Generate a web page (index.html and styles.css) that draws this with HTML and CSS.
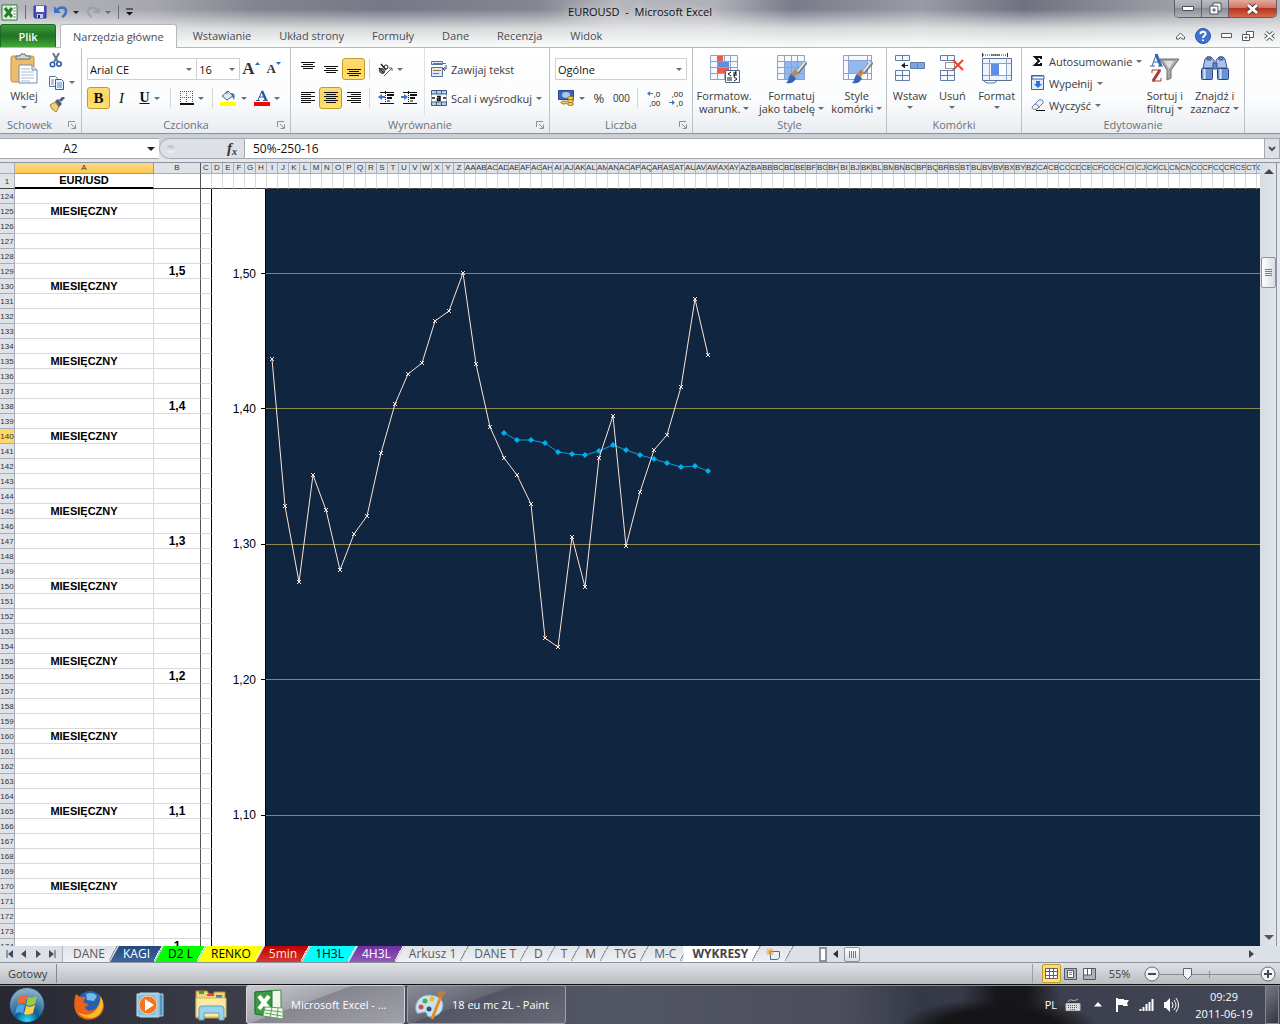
FILE: index.html
```html
<!DOCTYPE html>
<html lang="pl">
<head>
    <meta charset="UTF-8">
    <meta name="viewport" content="width=device-width, initial-scale=1.0">
    <title>EUROUSD - Microsoft Excel</title>
    <link rel="stylesheet" href="styles.css">
</head>
<body>
    <header class="window-top">
        <div class="titlebar">
            <div class="quick">
                <svg width="17" height="17" viewBox="0 0 17 17"><path d="M1 1h15v15H1z" fill="#fff" stroke="#217a2d"/><path d="M2 2h9v13H2z" fill="#d9efd0"/><path d="M4 4l7 9M11 4l-7 9" stroke="#21812e" stroke-width="3"/><path d="M12 4h3M12 7h3M12 10h3M12 13h3" stroke="#5aa34d"/></svg>
                <span class="quick-sep"></span>
                <button class="flat" aria-label="Zapisz"><svg width="14" height="14" viewBox="0 0 14 14"><path d="M1 1h12v12H2l-1-1z" fill="#4850bd" stroke="#303796"/><path d="M3 1h8v6H3z" fill="#f3f5ff"/><path d="M4 9h6v4H4z" fill="#c9cbe6"/><path d="M5 10h2v3H5z" fill="#23286e"/></svg></button>
                <button class="flat undo" aria-label="Cofnij"><svg width="14" height="14" viewBox="0 0 14 14"><path d="M0 1v7h7z" fill="#3c72c4"/><path d="M3 5c3-4 9-3 9 1 0 3-2 5-4 6" fill="none" stroke="#3c72c4" stroke-width="2.500"/></svg><i class="caret dark"></i></button>
                <button class="flat redo" aria-label="Ponów"><svg width="14" height="14" viewBox="0 0 14 14"><path d="M14 1v7H7z" fill="#9fa1a9"/><path d="M11 5C8 1 2 2 2 6c0 3 2 5 4 6" fill="none" stroke="#9fa1a9" stroke-width="2"/></svg><i class="caret"></i></button>
                <span class="quick-sep"></span>
                <button class="flat" aria-label="Dostosuj"><svg width="7" height="8" viewBox="0 0 7 8"><path d="M0 1h7" stroke="#111"/><path d="M0 4h7L3.500 7.500z" fill="#111"/></svg></button>
            </div>
            <h1 class="title">EUROUSD&nbsp; -&nbsp; Microsoft Excel</h1>
            <div class="win-buttons">
                <button aria-label="Minimalizuj"><svg width="12" height="5" viewBox="0 0 12 5"><path d="M.5.5h11v4H.5z" fill="#fff" stroke="#4b4e5a"/></svg></button>
                <button aria-label="Przywróć"><svg width="13" height="13" viewBox="0 0 13 13"><path d="M4 1h8v8H4z" fill="#fff" stroke="#4b4e5a"/><path d="M1 4h8v8H1z" fill="#fff" stroke="#4b4e5a"/><path d="M4 7h2v2H4z" fill="#fff" stroke="#4b4e5a"/></svg></button>
                <button class="close" aria-label="Zamknij"><svg width="13" height="12" viewBox="0 0 13 12"><path d="M2 2l9 8M11 2l-9 8" stroke="#5c3837" stroke-width="5"/><path d="M2 2l9 8M11 2l-9 8" stroke="#fff" stroke-width="3"/></svg></button>
            </div>
        </div>
        <nav class="tabs">
            <button class="file">Plik</button>
            <button class="active">Narzędzia główne</button>
            <button>Wstawianie</button>
            <button>Układ strony</button>
            <button>Formuły</button>
            <button>Dane</button>
            <button>Recenzja</button>
            <button>Widok</button>
            <div class="tab-tools">
                <svg width="9" height="8" viewBox="0 0 9 8"><path d="M.5 5L4.500 1l4 4v2H6L4.500 5 3 7H.5z" fill="#fff" stroke="#555a63"/></svg>
                <svg width="16" height="16" viewBox="0 0 16 16"><circle cx="8" cy="8" r="7.500" fill="#3f74cf" stroke="#2b55a2"/><path d="M5.500 6c0-3 5-3 5 0 0 2-2.500 1.500-2.500 4M8 11.500v1.500" stroke="#fff" stroke-width="2" fill="none"/></svg>
                <svg width="11" height="5" viewBox="0 0 11 5"><path d="M.5.5h10v4H.5z" fill="#fff" stroke="#555a63"/></svg>
                <svg width="12" height="11" viewBox="0 0 12 11"><path d="M4.500 1.500h7v6h-7z" fill="#fff" stroke="#555a63"/><path d="M.5 4.500h7v6h-7z" fill="#fff" stroke="#555a63"/><path d="M3 7h2v1H3z" fill="none" stroke="#555a63"/></svg>
                <svg width="11" height="10" viewBox="0 0 11 10"><path d="M1.500 1.500l8 7M9.500 1.500l-8 7" stroke="#555a63" stroke-width="4"/><path d="M1.500 1.500l8 7M9.500 1.500l-8 7" stroke="#fff" stroke-width="2"/></svg>
            </div>
        </nav>
    </header>

    <section class="ribbon">
        <div class="group clipboard">
            <div class="tools">
                <button class="big"><svg width="28" height="32" viewBox="0 0 28 32"><rect x="1" y="3" width="23" height="26" rx="2" fill="#edbd69" stroke="#c08b3c"/><path d="M6 6V3h4l1-2h4l1 2h4v3z" fill="#d5d8dc" stroke="#666b72"/><path d="M9 12h13l5 5v13H9z" fill="#fff" stroke="#7189b3"/><path d="M22 12v5h5" fill="#dce6f6" stroke="#7189b3"/><path d="M11 16h9M11 19h13M11 22h13M11 25h13M11 28h9" stroke="#a5bbdc"/></svg>Wklej<i class="caret"></i></button>
                <div class="stack">
                    <button class="flat" aria-label="Wytnij"><svg width="14" height="15" viewBox="0 0 14 15"><path d="M4 0l5 9M10 0L5 9" stroke="#68758c" stroke-width="2"/><circle cx="3.500" cy="11.500" r="2.200" fill="none" stroke="#2f5aa8" stroke-width="1.600"/><circle cx="10" cy="11" r="2.200" fill="none" stroke="#2f5aa8" stroke-width="1.600"/></svg></button>
                    <button class="flat" aria-label="Kopiuj"><svg width="16" height="14" viewBox="0 0 16 14"><path d="M.5.5h6l2 2v8h-8z" fill="#fff" stroke="#4870ae"/><path d="M6.500 3.500h6l2 2v8h-8z" fill="#e8f0fc" stroke="#355f9f"/><path d="M2 4h3M2 6h3M2 8h3M8 7h5M8 9h5M8 11h5" stroke="#5f8ac8"/></svg><i class="caret"></i></button>
                    <button class="flat" aria-label="Malarz formatów"><svg width="16" height="15" viewBox="0 0 16 15"><path d="M1 8l5-3 4 5-3 5-4-3z" fill="#efcf72" stroke="#a98436"/><path d="M6 4l3-2 4 5-3 3z" fill="#555c6e"/><path d="M11 4l4-4" stroke="#545b91" stroke-width="3"/></svg></button>
                </div>
            </div>
            <div class="group-name">Schowek<svg class="launcher" width="8" height="8" viewBox="0 0 8 8"><path d="M.5 6V.5H7M3 3l4 4M7.500 3.500v4h-4" fill="none" stroke="#8b9099"/></svg></div>
        </div>

        <div class="group font">
            <div class="tools rows">
                <div class="row">
                    <span class="combo face"><select aria-label="Czcionka"><option>Arial CE</option></select></span><span class="combo size"><select aria-label="Rozmiar czcionki"><option>16</option></select></span>
                    <button class="tool grow" aria-label="Zwiększ rozmiar czcionki">A<svg width="5" height="14" viewBox="0 0 5 14"><path d="M0 3h5L2.500 0z" fill="#3664ad"/></svg></button>
                    <button class="tool shrink" aria-label="Zmniejsz rozmiar czcionki">A<svg width="5" height="14" viewBox="0 0 5 14"><path d="M0 0h5L2.500 3z" fill="#3664ad"/></svg></button>
                </div>
                <div class="row">
                    <button class="tool on serif">B</button>
                    <button class="tool serif italic">I</button>
                    <button class="tool wide serif under"><u>U</u><i class="caret"></i></button>
                    <span class="sep"></span>
                    <button class="tool wide" aria-label="Obramowanie"><svg width="14" height="14" viewBox="0 0 14 14"><path d="M.5 0v12M6.500 0v12M12.500 0v12M0 .5h13M0 6.500h13" stroke="#555" stroke-dasharray="1 1"/><path d="M0 13h14" stroke="#111" stroke-width="2"/></svg><i class="caret"></i></button>
                    <span class="sep"></span>
                    <button class="tool wide" aria-label="Kolor wypełnienia"><svg width="17" height="16" viewBox="0 0 17 16"><path d="M2 6l6-5 5 5-6 4z" fill="#dce9fa" stroke="#47607f"/><path d="M7 4V1" stroke="#47607f"/><path d="M11 3c4 0 4 3 3 7l-2-4z" fill="#416aa9"/><path d="M0 12h16v4H0z" fill="#ff0"/></svg><i class="caret"></i></button>
                    <button class="tool wide" aria-label="Kolor czcionki"><svg width="16" height="16" viewBox="0 0 16 16"><path d="M4 10l4-9" stroke="#33559b" fill="none"/><path d="M8 1l4 9" stroke="#33559b" stroke-width="2.500"/><path d="M5 7h6M2 10.500h4M9 10.500h5" stroke="#33559b"/><path d="M0 12h16v4H0z" fill="red"/></svg><i class="caret"></i></button>
                </div>
            </div>
            <div class="group-name">Czcionka<svg class="launcher" width="8" height="8" viewBox="0 0 8 8"><path d="M.5 6V.5H7M3 3l4 4M7.500 3.500v4h-4" fill="none" stroke="#8b9099"/></svg></div>
        </div>

        <div class="group align">
            <div class="tools">
                <div class="rows">
                    <div class="row">
                        <button class="tool" aria-label="Do góry"><svg width="14" height="14" viewBox="0 0 14 14"><path d="M0 .5h14M2 2.500h10M0 4.500h14M2 6.500h10" stroke="#111"/></svg></button>
                        <button class="tool" aria-label="Do środka"><svg width="14" height="14" viewBox="0 0 14 14"><path d="M0 4.500h14M2 6.500h10M0 8.500h14M2 10.500h10" stroke="#111"/></svg></button>
                        <button class="tool on" aria-label="Do dołu"><svg width="14" height="14" viewBox="0 0 14 14"><path d="M0 7.500h14M2 9.500h10M0 11.500h14M2 13.500h10" stroke="#111"/></svg></button>
                        <span class="sep"></span>
                        <button class="tool wide" aria-label="Orientacja"><svg width="15" height="15" viewBox="0 0 15 15"><g fill="none" stroke="#222"><ellipse cx="4" cy="9" rx="2" ry="2.500" transform="rotate(-45 4 9)"/><path d="M1 6l5 5M3 2l5 6" stroke-width="1.500"/><circle cx="8" cy="5" r="2"/></g><path d="M6 14l8-8M14 9V6h-3" fill="none" stroke="#61656c"/></svg><i class="caret"></i></button>
                    </div>
                    <div class="row">
                        <button class="tool" aria-label="Do lewej"><svg width="14" height="12" viewBox="0 0 14 12"><path d="M0 .5h14M0 2.500h10M0 4.500h14M0 6.500h10M0 8.500h14M0 10.500h10" stroke="#111"/></svg></button>
                        <button class="tool on" aria-label="Wyśrodkuj"><svg width="14" height="12" viewBox="0 0 14 12"><path d="M0 .5h14M2 2.500h10M0 4.500h14M2 6.500h10M0 8.500h14M2 10.500h10" stroke="#111"/></svg></button>
                        <button class="tool" aria-label="Do prawej"><svg width="14" height="12" viewBox="0 0 14 12"><path d="M0 .5h14M4 2.500h10M0 4.500h14M4 6.500h10M0 8.500h14M4 10.500h10" stroke="#111"/></svg></button>
                        <span class="sep"></span>
                        <button class="tool" aria-label="Zmniejsz wcięcie"><svg width="16" height="14" viewBox="0 0 16 14"><path d="M2 1.500h14M9 4h7M9 7h5M9 10h3M2 12.500h14" stroke="#111"/><path d="M9 4h7M9 7h5" stroke="#111" stroke-width="2"/><path d="M7.500 0v14" stroke="#111" stroke-dasharray="1 1"/><path d="M0 6l4-3v2h3v2H4v2z" fill="#3b74cb"/></svg></button>
                        <button class="tool" aria-label="Zwiększ wcięcie"><svg width="16" height="14" viewBox="0 0 16 14"><path d="M2 1.500h14M9 4h7M9 7h5M9 10h3M2 12.500h14" stroke="#111"/><path d="M9 4h7M9 7h5" stroke="#111" stroke-width="2"/><path d="M7.500 0v14" stroke="#111" stroke-dasharray="1 1"/><path d="M7 6L3 3v2H0v2h3v2z" fill="#3b74cb"/></svg></button>
                    </div>
                </div>
                <div class="rows ruled">
                    <button class="line"><svg width="16" height="16" viewBox="0 0 16 16"><path d="M.5.5h11v3H.5zM.5 6.500h11v9H.5z" fill="#dfe9f7" stroke="#54729b"/><path d="M2 2.500h13" stroke="#a1673c"/><path d="M2 9.500h8M2 12.500h6" stroke="#a1673c"/><path d="M15 4v4h-3M14 6l-2 2 2 2" fill="none" stroke="#2f548c"/></svg>Zawijaj tekst</button>
                    <button class="line"><svg width="16" height="16" viewBox="0 0 16 16"><path d="M.5.500h15v15H.5z" fill="#bcd0ea" stroke="#3d5a87"/><path d="M5.500 0v4M10.500 0v4M5.500 12v4M10.500 12v4" stroke="#3d5a87"/><path d="M0 4h16v8H0z" fill="#fff" stroke="#3d5a87"/><path d="M1 8h3M12 8h3M6 6.500h3v4H6.500v-2H9" fill="none" stroke="#111" stroke-width="1.500"/></svg>Scal i wyśrodkuj<i class="caret"></i></button>
                </div>
            </div>
            <div class="group-name">Wyrównanie<svg class="launcher" width="8" height="8" viewBox="0 0 8 8"><path d="M.5 6V.5H7M3 3l4 4M7.500 3.500v4h-4" fill="none" stroke="#8b9099"/></svg></div>
        </div>

        <div class="group number">
            <div class="tools rows">
                <div class="row"><span class="combo format"><select aria-label="Format liczb"><option>Ogólne</option></select></span></div>
                <div class="row">
                    <button class="tool wide" aria-label="Format księgowy"><svg width="17" height="16" viewBox="0 0 17 16"><path d="M.5.5h15v9H.5z" fill="#3e68b4" stroke="#28488a"/><ellipse cx="8" cy="5" rx="4" ry="3" fill="#a9c6ee"/><ellipse cx="12.500" cy="8" rx="3" ry="1.500" fill="#f7d35c" stroke="#a5751e"/><ellipse cx="12.500" cy="11" rx="3" ry="1.500" fill="#f7d35c" stroke="#a5751e"/><ellipse cx="12.500" cy="14" rx="3" ry="1.500" fill="#f7d35c" stroke="#a5751e"/><ellipse cx="6" cy="12.500" rx="3" ry="1.500" fill="#f7d35c" stroke="#a5751e"/></svg><i class="caret"></i></button>
                    <button class="tool percent-style">%</button>
                    <button class="tool zeros">000</button>
                    <span class="sep"></span>
                    <button class="tool decimals"><span class="digits"><svg width="6" height="5" viewBox="0 0 6 5"><path d="M0 2.500L3 0v2h3v1H3v2z" fill="#3b74cb"/></svg>,0</span><span class="digits">,00</span></button>
                    <button class="tool decimals"><span class="digits">,00</span><span class="digits"><svg width="6" height="5" viewBox="0 0 6 5"><path d="M6 2.500L3 0v2H0v1h3v2z" fill="#3b74cb"/></svg>,0</span></button>
                </div>
            </div>
            <div class="group-name">Liczba<svg class="launcher" width="8" height="8" viewBox="0 0 8 8"><path d="M.5 6V.5H7M3 3l4 4M7.500 3.500v4h-4" fill="none" stroke="#8b9099"/></svg></div>
        </div>

        <div class="group styles">
            <div class="tools">
                <button class="big"><svg width="32" height="32" viewBox="0 0 32 32"><path d="M2.500 2.500h27v24h-27z" fill="#f5f9ff" stroke="#8ba3c7"/><path d="M9.500 3v24M16.500 3v24M22.500 3v24M3 8.500h26M3 14.500h26M3 20.500h26" stroke="#8ba3c7" fill="none"/><path d="M9 3h6v5H9zM9 15h12v5H9z" fill="#ef5b45"/><path d="M10 9h11v5H10z" fill="#5e8fe6"/><path d="M17.500 17.500h14v12h-14z" fill="#fff" stroke="#4d6288"/><path d="M23 19l-3 2 3 2M19 25h5M19 27h5M25 20h4M25 22h4M28 18l-2 6M26 24l3 2-3 2" fill="none" stroke="#111"/></svg><span>Formatow.</span><span>warunk.<i class="caret"></i></span></button>
                <button class="big"><svg width="32" height="32" viewBox="0 0 32 32"><path d="M2.500 2.500h27v24h-27z" fill="#f5f9ff" stroke="#8ba3c7"/><path d="M9 9h20v17H9z" fill="#92b8f2"/><path d="M9.500 3v24M16.500 3v24M22.500 3v24M3 8.500h26M3 14.500h26M3 20.500h26" stroke="#8ba3c7" fill="none"/><path d="M31 9l-9 11" stroke="#777e89" stroke-width="4"/><path d="M30 9l-8 10" stroke="#e6e7e9" stroke-width="2"/><path d="M23 19l-3-3-4 5 4 3z" fill="#bd874d"/><path d="M16 21l5 4c-2 5-6 6-10 5 3-2 2-7 5-9z" fill="#3767b6"/></svg><span>Formatuj</span><span>jako tabelę<i class="caret"></i></span></button>
                <button class="big"><svg width="32" height="32" viewBox="0 0 32 32"><path d="M2.500 2.500h28v24h-28z" fill="#f5f9ff" stroke="#8ba3c7"/><path d="M7.500 3v24M26.500 3v24M3 7.500h27M3 20.500h27" stroke="#8ba3c7"/><path d="M8 8h18v12H8z" fill="#92b8f2"/><path d="M31 9l-9 11" stroke="#777e89" stroke-width="4"/><path d="M30 9l-8 10" stroke="#e6e7e9" stroke-width="2"/><path d="M23 19l-3-3-4 5 4 3z" fill="#bd874d"/><path d="M16 21l5 4c-2 5-6 6-10 5 3-2 2-7 5-9z" fill="#3767b6"/></svg><span>Style</span><span>komórki<i class="caret"></i></span></button>
            </div>
            <div class="group-name">Style</div>
        </div>

        <div class="group cells">
            <div class="tools">
                <button class="big"><svg width="32" height="32" viewBox="0 0 32 32"><g fill="#f4f8ff" stroke="#637fa9"><path d="M1.500 2.500h14v5h-14zM1.500 17.500h14v10h-14zM8.500 2.500v5M8.500 17.500v10M1.500 22.500h14"/><path d="M16.500 9.500h14v6h-14z" fill="#7da3e8"/><path d="M23.500 9.500v6"/></g><path d="M8 12.500h6" stroke="#222"/><path d="M7 12.500l4-3v6z" fill="#222"/></svg>Wstaw<i class="caret"></i></button>
                <button class="big"><svg width="28" height="32" viewBox="0 0 28 32"><g fill="#f4f8ff" stroke="#637fa9"><path d="M2.500 2.500h14v5h-14zM2.500 17.500h14v10h-14zM9.500 2.500v5M9.500 17.500v10M2.500 22.500h14"/></g><path d="M7.500 9.500h9v6h-9z" fill="none" stroke="#333" stroke-dasharray="1 1"/><path d="M15 7l10 10M25 7L15 17" stroke="#ee4230" stroke-width="2"/></svg>Usuń<i class="caret"></i></button>
                <button class="big"><svg width="32" height="32" viewBox="0 0 32 32"><path d="M1.500 0v4M26.500 0v4" stroke="#333"/><path d="M2 2h25" stroke="#333" stroke-dasharray="1 1"/><path d="M10 2h9" stroke="#333"/><path d="M1.500 5.500h29v22h-29z" fill="#eef4fd" stroke="#5b7394"/><path d="M8.500 5v22M25.500 5v22M2 10.500h28M2 22.500h28" stroke="#8ba3c7"/><path d="M9 11h16v11H9z" fill="#fff"/><path d="M10 11h8v11h-8z" fill="#5e8fe6"/><path d="M3 28q1 2 4 2h6l3-2" fill="none" stroke="#5b7394"/></svg>Format<i class="caret"></i></button>
            </div>
            <div class="group-name">Komórki</div>
        </div>

        <div class="group edit">
            <div class="tools">
                <div class="edit-list">
                    <button class="line"><svg width="14" height="14" viewBox="0 0 14 14"><path d="M10 5V3H4l4 4-4 4h6V9" fill="none" stroke="#111" stroke-width="2"/></svg>Autosumowanie<i class="caret"></i></button>
                    <button class="line"><svg width="14" height="16" viewBox="0 0 14 16"><path d="M.5.500h12v14H.5z" fill="#e2ebf8" stroke="#3f63a5"/><path d="M1 1h12v3H1z" fill="#fff" stroke="#3f63a5"/><path d="M5 6h4v3h2l-4 4-4-4h2z" fill="#2e70d6"/></svg>Wypełnij<i class="caret"></i></button>
                    <button class="line"><svg width="14" height="14" viewBox="0 0 14 14"><path d="M1 9l7-7c3-1 5 1 4 3l-6 6c-3 1-5 0-5-2z" fill="#edf2fa" stroke="#65789a"/><path d="M4 6c2 0 4 2 4 4" fill="none" stroke="#65789a"/><path d="M5 12.500h9" stroke="#111"/></svg>Wyczyść<i class="caret"></i></button>
                </div>
                <button class="big"><svg width="32" height="32" viewBox="0 0 32 32"><path d="M11 6h19l-8 11v8l-4 2V17z" fill="#a5a7aa" stroke="#6b6e73"/><path d="M15 8h10l-5 8z" fill="#dcdddf"/><path d="M3 13l4-11" stroke="#3863b4"/><path d="M7 1l5 12" stroke="#3863b4" stroke-width="3"/><path d="M4 9h5M1 13h5M9 13h5" stroke="#3863b4"/><path d="M3 20v-3h9M3 28h9v-3" fill="none" stroke="#a63c38"/><path d="M11 17L4 28" stroke="#a63c38" stroke-width="3"/></svg><span>Sortuj i</span><span>filtruj<i class="caret"></i></span></button>
                <button class="big"><svg width="32" height="32" viewBox="0 0 32 32"><path d="M6 6l2-2h4l3 3v3h2V7l3-3h4l2 2 2 9H4z" fill="#a9c2ec" stroke="#3c588f"/><path d="M8 4h4v3H8zM20 4h4v3h-4zM14 10h4v6h-4z" fill="#6287cb" stroke="#3c588f"/><rect x="2.500" y="15.500" width="11" height="11" rx="1" fill="#6b91d5" stroke="#294884"/><rect x="18.500" y="15.500" width="11" height="11" rx="1" fill="#6b91d5" stroke="#294884"/><path d="M5.500 16v10M21.500 16v10" stroke="#dbe7fb" stroke-width="2"/></svg><span>Znajdź i</span><span>zaznacz<i class="caret"></i></span></button>
            </div>
            <div class="group-name">Edytowanie</div>
        </div>
    </section>

    <section class="formula-bar">
        <div class="name-box"><input type="text" value="A2" aria-label="Pole nazwy"><i class="caret dark"></i></div>
        <div class="fx"><span class="knob"></span><button class="flat" aria-label="Wstaw funkcję">f<small>x</small></button></div>
        <input class="formula" type="text" value="50%-250-16" aria-label="Pasek formuły">
        <button class="expand" aria-label="Rozwiń"><svg width="8" height="6" viewBox="0 0 8 6"><path d="M1 1l3 3 3-3" fill="none" stroke="#4c5158" stroke-width="2"/></svg></button>
    </section>

    <main class="workspace">
        <div class="sheet">
            <table>
                <thead>
                    <tr class="letters" id="letters">
                        <th class="corner"></th>
                        <th class="col-a selected">A</th>
                        <th class="col-b">B</th>
                        <th class="col-c">C</th>
                    </tr>
                    <tr class="frozen" id="frozen">
                        <th>1</th>
                        <td class="heading">EUR/USD</td>
                        <td class="col-b"></td>
                        <td></td>
                    </tr>
                </thead>
                <tbody id="rows">
                    <tr>
                        <th>124</th>
                        <td></td>
                        <td class="col-b"></td>
                        <td class="edge"></td>
                        <td class="chart" id="chart">
                            <svg width="1056" height="765" viewBox="212 189 1056 765">
                                <defs>
                                    <marker id="cross" markerWidth="7" markerHeight="7" refX="3" refY="3" markerUnits="userSpaceOnUse">
                                        <path d="M1 1l4 4M5 1L1 5" stroke="#fbe5d6"/>
                                    </marker>
                                    <marker id="diamond" markerWidth="7" markerHeight="7" refX="3" refY="3" markerUnits="userSpaceOnUse">
                                        <path d="M3 0l3 3-3 3-3-3z" fill="#00b0f0"/>
                                    </marker>
                                </defs>
                                <rect class="plot" x="265" y="189" width="1003" height="765"/>
                                <path class="grid-line" d="M266 273.500h1002M266 408.500h1002M266 544.500h1002M266 679.500h1002M266 815.500h1002"/>
                                <path class="axis" d="M265.500 189v765M261 273.500h5M261 408.500h5M261 544.500h5M261 679.500h5M261 815.500h5"/>
                                <g class="axis-text">
                                    <text x="256" y="278">1,50</text>
                                    <text x="256" y="413">1,40</text>
                                    <text x="256" y="548">1,30</text>
                                    <text x="256" y="684">1,20</text>
                                    <text x="256" y="819">1,10</text>
                                </g>
                                <polyline class="average" points="504,433 517,440 531,440 545,443 558,452 572,454 585,455 599,451 613,445 626,450 640,455 654,459 667,463 681,467 695,466 708,471"/>
                                <polyline class="price" points="272,359 285,506 299,582 313,475 326,510 340,570 354,534 367,516 381,453 395,404 408,374 422,363 435,321 449,311 463,273 476,364 490,427 504,458 517,475 531,504 545,638 558,647 572,537 585,587 599,458 613,416 626,546 640,492 654,450 667,435 681,387 695,299 708,355"/>
                            </svg>
                        </td>
                    </tr>
                </tbody>
            </table>
        </div>
        <div class="scroll-v">
            <button aria-label="W górę"><i class="up"></i></button>
            <span class="thumb-v"></span>
            <button aria-label="W dół"><i class="down"></i></button>
        </div>
    </main>

    <div class="sheet-bar">
        <div class="sheet-nav">
            <svg width="8" height="8" viewBox="0 0 8 8"><path d="M1 0v8" stroke="#444b57"/><path d="M7 0v8L2 4z" fill="#444b57"/></svg>
            <svg width="6" height="8" viewBox="0 0 6 8"><path d="M5 0v8L0 4z" fill="#444b57"/></svg>
            <svg width="6" height="8" viewBox="0 0 6 8"><path d="M1 0v8l5-4z" fill="#444b57"/></svg>
            <svg width="8" height="8" viewBox="0 0 8 8"><path d="M7 0v8" stroke="#444b57"/><path d="M1 0v8l5-4z" fill="#444b57"/></svg>
        </div>
        <div class="sheet-tabs">
            <button class="first">DANE</button>
            <button class="navy">KAGI</button>
            <button class="green">D2 L</button>
            <button class="yellow">RENKO</button>
            <button class="red">5min</button>
            <button class="cyan">1H3L</button>
            <button class="purple">4H3L</button>
            <button>Arkusz 1</button>
            <button>DANE T</button>
            <button>D</button>
            <button>T</button>
            <button>M</button>
            <button>TYG</button>
            <button>M-C</button>
            <button class="current">WYKRESY</button>
            <button aria-label="Wstaw arkusz"><svg width="15" height="13" viewBox="0 0 15 13"><path d="M4.500 3.500h9v6l-2 2h-7z" fill="#e7effb" stroke="#4d6b9c"/><path d="M4 0v8M0 4h8M1 1l6 6M7 1L1 7" stroke="#e79a23"/></svg></button>
        </div>
        <div class="scroll-h">
            <span class="splitter"></span>
            <button aria-label="W lewo"><i class="left"></i></button>
            <span class="thumb-h"></span>
            <button class="end" aria-label="W prawo"><i class="right"></i></button>
        </div>
    </div>

    <footer class="status">
        <span class="ready">Gotowy</span>
        <div class="views">
            <button class="view on" aria-label="Normalny"><svg width="13" height="11" viewBox="0 0 13 11"><path d="M.5.5h12v10H.5zM4.500 0v11M8.500 0v11M0 3.500h13M0 7.500h13" fill="#fff" stroke="#666257"/></svg></button>
            <button class="view" aria-label="Układ strony"><svg width="13" height="12" viewBox="0 0 13 12"><path d="M.5.5h12v11H.5z" fill="#aeb2b8" stroke="#555a62"/><path d="M3.500 2.500h6v7h-6z" fill="#fff" stroke="#555a62"/><path d="M5 4.500h3M5 6.500h3" stroke="#777"/></svg></button>
            <button class="view" aria-label="Podział stron"><svg width="13" height="12" viewBox="0 0 13 12"><path d="M.5.5h12v11H.5z" fill="#aeb2b8" stroke="#555a62"/><path d="M1 1h3v6H1zM5 1h3v6H5z" fill="#fff"/><path d="M4.500 0v7M8.500 0v7H0" fill="none" stroke="#555a62"/></svg></button>
            <span class="percent">55%</span>
            <button class="flat" aria-label="Pomniejsz"><svg width="16" height="16" viewBox="0 0 16 16"><circle cx="8" cy="8" r="7" fill="#f2f3f5" stroke="#646972"/><path d="M4 8h8" stroke="#464b53" stroke-width="2"/></svg></button>
            <svg class="slider" width="100" height="14" viewBox="0 0 100 14"><path d="M0 7.500h100M49.500 4v7" stroke="#888e99"/><path d="M23.500 1.500h8v7l-4 4-4-4z" fill="#f3f4f6" stroke="#5e636d"/></svg>
            <button class="flat" aria-label="Powiększ"><svg width="16" height="16" viewBox="0 0 16 16"><circle cx="8" cy="8" r="7" fill="#f2f3f5" stroke="#646972"/><path d="M4 8h8M8 4v8" stroke="#464b53" stroke-width="2"/></svg></button>
        </div>
    </footer>

    <div class="taskbar">
        <button class="start" aria-label="Start"><svg width="38" height="38" viewBox="0 0 38 38">
            <defs><radialGradient id="orb" cx="50%" cy="95%" r="85%"><stop offset="0" stop-color="#2ee0ff"/><stop offset=".4" stop-color="#0f5c92"/><stop offset="1" stop-color="#86aac6"/></radialGradient></defs>
            <circle cx="19" cy="19" r="17.500" fill="url(#orb)" stroke="#14354f"/><path d="M11 11q4-3 8-1l-2 8q-4-2-8 1z" fill="#ee6734"/><path d="M20 11q4 2 9-1l-2 8q-5 3-9 1z" fill="#98cc47"/><path d="M9 20q4-3 8-1l-2 8q-4-2-8 1z" fill="#4ba4e8"/><path d="M18 20q4 2 9-1l-2 8q-5 3-9 1z" fill="#fdd041"/></svg></button>
        <button class="pinned" aria-label="Firefox"><svg width="32" height="32" viewBox="0 0 32 32"><circle cx="17" cy="15" r="13" fill="#2a5fb0"/><path d="M13 5q7-3 11 2l-3 5-7-1z" fill="#6ebcee"/><path d="M3 5l4 3 6 0-3 5 6 3-4 2c1 5 9 5 13-1 3-4 2-8 1-11 5 5 7 13 2 19-6 7-18 8-24 0C0 19 1 10 3 5z" fill="#e8641b"/><path d="M28 8c5 9 0 21-11 21-5 0-9-2-12-6 9 6 20 3 23-15z" fill="#fbbb24"/></svg></button>
        <button class="pinned" aria-label="Windows Media Player"><svg width="28" height="28" viewBox="0 0 28 28"><path d="M8 3h19v22H8z" fill="#5594bd" stroke="#a5d2ec"/><path d="M4 2h19v24H4z" fill="#6baed6" stroke="#b7dcf1"/><path d="M1 3h20v22H1z" fill="#86bfe1" stroke="#c4e3f4"/><circle cx="12" cy="14" r="9" fill="#f1761f" stroke="#fbd0a1"/><path d="M9 8v12l9-6z" fill="#fff"/></svg></button>
        <button class="pinned" aria-label="Eksplorator"><svg width="34" height="32" viewBox="0 0 34 32"><path d="M2 5V2h11l2 3h5V3h11v26H2z" fill="#f1d37a" stroke="#b58e37"/><path d="M5 2h5v3H5z" fill="#30a840"/><path d="M13 5h7v2h-7z" fill="#df4836"/><path d="M22 6h6v3h-6z" fill="#3b82cc"/><path d="M2 9h30v19H2z" fill="#fbe9a3" stroke="#d7b459"/><path d="M5 31V20q0-3 3-3h19q3 0 3 3v11h-5v-7H10v7z" fill="#9bd2ec" stroke="#5d9fc5"/></svg></button>
        <button class="task front"><svg width="32" height="32" viewBox="0 0 32 32"><path d="M2 3l26-2v21H2z" fill="#eef7ea" stroke="#338c3e"/><path d="M2 3l17-1v26L2 25z" fill="#3b9a45" stroke="#226f2e"/><path d="M6 7l10 13M16 7L6 20" stroke="#fff" stroke-width="4"/><path d="M12 18l18 1v11l-20-3z" fill="#f5fbf3" stroke="#61a35f"/><path d="M12 21l17 2M12 24l17 3M19 18l-2 11M25 19l-1 11" stroke="#61a35f"/></svg>Microsoft Excel - ...</button>
        <button class="task"><svg width="32" height="32" viewBox="0 0 32 32"><path d="M15 6c8 0 14 4 14 10 0 8-7 12-13 12-4 0-2-4-5-5-3 0-5 2-8 1C-1 17 4 6 15 6z" fill="#c5e4f2" stroke="#78abc7"/><circle cx="7" cy="18" r="2.500" fill="#e7473b"/><circle cx="11" cy="12" r="2.500" fill="#4eaf47"/><circle cx="18" cy="10" r="2.500" fill="#f0b72c"/><circle cx="15" cy="20" r="2.500" fill="#31566e"/><path d="M27 7l-9 23" stroke="#e98a2c" stroke-width="3"/><path d="M24 8c-2-6 3-7 8-5-1 2-3 3-4 6z" fill="#b97d46"/></svg>18 eu mc 2L - Paint</button>
        <div class="tray">
            <span>PL</span>
            <svg width="16" height="14" viewBox="0 0 16 14"><path d="M1 5.500h14v7H1z" fill="#ddd" stroke="#bbb"/><path d="M3 7.500h10M3 9.500h10M5 11.500h6" stroke="#555" stroke-dasharray="1 1"/><path d="M3 4c2-5 5 1 10-3" fill="none" stroke="#bbb"/></svg>
            <svg class="tray-up" width="8" height="5" viewBox="0 0 8 5"><path d="M0 4.500h8L4 0z" fill="#fff"/></svg>
            <svg width="16" height="16" viewBox="0 0 16 16"><path d="M2 1v14" stroke="#fff" stroke-width="2"/><path d="M3 2h6v1h5l-2 3 1 3H8V8H3z" fill="#fff"/></svg>
            <svg width="16" height="14" viewBox="0 0 16 14"><path d="M1.500 11v2M4.500 9v4M7.500 6v7M10.500 4v9M13.500 1v12" stroke="#fff" stroke-width="2"/></svg>
            <svg width="16" height="16" viewBox="0 0 16 16"><path d="M1 5h2l4-4v14l-4-4H1z" fill="#fff"/><path d="M9 5q2 3 0 6M11 3q4 5 0 10M13 1q5 7 0 14" fill="none" stroke="#fff"/></svg>
        </div>
        <div class="clock"><span>09:29</span><span>2011-06-19</span></div>
        <button class="show-desktop" aria-label="Pokaż pulpit"></button>
    </div>

    <script>
        const columns = 96;
        const firstColumn = 4;
        const firstRow = 124;
        const lastRow = 174;
        const prices = { 129: '1,5', 138: '1,4', 147: '1,3', 156: '1,2', 165: '1,1', 174: '1' };

        function columnName(n) {
            let name = '';
            while (n > 0) {
                name = String.fromCharCode(65 + (n - 1) % 26) + name;
                n = Math.floor((n - 1) / 26);
            }
            return name;
        }

        const letters = document.getElementById('letters');
        const frozen = document.getElementById('frozen');
        for (let i = 0; i < columns; i++) {
            const th = document.createElement('th');
            th.textContent = columnName(firstColumn + i);
            letters.appendChild(th);
            frozen.appendChild(document.createElement('td'));
        }

        const chart = document.getElementById('chart');
        chart.colSpan = columns;
        chart.rowSpan = lastRow - firstRow + 1;

        const rows = document.getElementById('rows');
        for (let r = firstRow + 1; r <= lastRow; r++) {
            const tr = document.createElement('tr');
            const label = r % 5 === 0 ? 'MIESIĘCZNY' : '';
            const mark = r === 140 ? ' class="marked"' : '';
            tr.innerHTML = `<th${mark}>${r}</th><td>${label}</td><td class="col-b">${prices[r] || ''}</td><td class="edge"></td>`;
            rows.appendChild(tr);
        }
    </script>
</body>
</html>
```
FILE: styles.css
```css
* {
    box-sizing: border-box;
}

body {
    margin: 0;
    height: 100vh;
    display: flex;
    flex-direction: column;
    overflow: hidden;
    font-family: "Open Sans", "Noto Sans", sans-serif;
    font-size: 11px;
    color: #3b3b3b;
    background-color: #dfe3e8;
}

button, input, select {
    font: inherit;
    color: inherit;
    margin: 0;
    padding: 0;
    border: 0;
    background: none;
}

button {
    display: flex;
    align-items: center;
    justify-content: center;
    white-space: nowrap;
}

svg {
    display: block;
    flex: none;
}

.caret {
    border: 3px solid transparent;
    border-top-color: #6a6d73;
    border-bottom: 0;
    flex: none;
}

.caret.dark {
    border-width: 4px 4px 0;
    border-top-color: #222;
}

/* title bar and tabs */

.window-top {
    flex: none;
    border-bottom: 1px solid #b4b8bb;
    background: linear-gradient(rgba(255, 255, 255, 0) 20%, rgba(236, 238, 238, 0.8) 60%, #f7f8f8 95%),
        linear-gradient(90deg, #b7b7be 0, #a6a6ae 12%, #84848f 20%, #777886 30%, #858692 42%, #b6b6bd 48%, #b0b0b8 56%, #7a7b89 62%, #9b9ba6 72%, #70717f 80%, #9999a2 90%, #b3b3ba 100%);
}

.titlebar {
    display: grid;
    grid-template-columns: 1fr auto 1fr;
    height: 24px;
}

.quick {
    display: flex;
    align-items: center;
    gap: 7px;
    padding-left: 1px;
}

.quick-sep {
    width: 1px;
    height: 14px;
    background-color: #6c6d76;
}

.quick .caret {
    margin-left: 5px;
}

.quick .dark {
    border-width: 3px 3px 0;
}

.title {
    margin: 0;
    font-size: 11px;
    font-weight: normal;
    line-height: 24px;
    color: #111;
    text-shadow: 0 0 8px #fff;
}

.win-buttons {
    display: flex;
    justify-self: end;
    height: 18px;
    margin-right: 3px;
    border: 1px solid #5c5d67;
    border-top: 0;
    border-radius: 0 0 5px 5px;
    overflow: hidden;
}

.win-buttons button {
    width: 27px;
    background: linear-gradient(#bbbcc2, #9fa0a9 50%, #8a8b95 50%, #b2b3ba);
    border-right: 1px solid #5c5d67;
}

.win-buttons .close {
    width: 47px;
    border: 0;
    background: linear-gradient(#e3aaa0, #cf6f5d 50%, #b8331d 50%, #d5694c);
}

.tabs {
    display: flex;
    align-items: stretch;
    height: 23px;
}

.tabs button {
    padding: 0 14px;
    color: #4a4d52;
}

.tabs .file {
    width: 56px;
    margin-right: 4px;
    color: #fff;
    font-weight: 600;
    border: 1px solid #1c6b20;
    border-bottom: 0;
    border-radius: 3px 3px 0 0;
    background: linear-gradient(#3f9b3c, #1f7423 50%, #43a838);
}

.tabs .active {
    height: 24px;
    margin-right: 2px;
    padding: 0 12px;
    border: 1px solid #b4b8bb;
    border-bottom: 0;
    border-radius: 3px 3px 0 0;
    background-color: #fff;
}

.tab-tools {
    display: flex;
    align-items: center;
    gap: 10px;
    margin-left: auto;
    padding-right: 5px;
}

/* ribbon */

.ribbon {
    display: flex;
    flex: none;
    height: 86px;
    background: linear-gradient(#fff, #fbfcfd 60%, #e9ecf0);
    border-bottom: 1px solid #8d939b;
}

.group {
    display: flex;
    flex-direction: column;
    flex: none;
    border-right: 1px solid #bdc1c7;
}

.clipboard { width: 82px; }
.font { width: 209px; }
.align { width: 259px; }
.number { width: 143px; }
.styles { width: 194px; }
.cells { width: 135px; }
.edit { width: 223px; }

.tools {
    display: flex;
    flex: 1;
    padding: 0 5px;
}

.group-name {
    display: grid;
    grid-template-columns: 1fr auto 1fr;
    align-items: center;
    height: 17px;
    padding: 0 5px;
    color: #6b717b;
}

.group-name::before {
    content: "";
}

.clipboard .group-name {
    grid-template-columns: 2px auto 1fr;
}

.launcher {
    justify-self: end;
}

.rows {
    display: flex;
    flex-direction: column;
    gap: 7px;
    padding-top: 10px;
}

.tools.rows {
    padding: 10px 5px 0;
}

.row {
    display: flex;
    align-items: center;
    height: 22px;
}

.ruled {
    margin-left: 4px;
    padding-left: 6px;
    border-left: 1px solid #dfe1e4;
}

.sep {
    width: 1px;
    height: 20px;
    margin: 0 4px;
    background-color: #d3d6da;
}

.tool {
    width: 23px;
    height: 22px;
    border: 1px solid transparent;
    border-radius: 3px;
}

.tool.wide {
    width: 33px;
    gap: 4px;
}

.tool.on, .view.on {
    border-color: #c29b29;
    background: linear-gradient(#fbdb7c, #fed65d 50%, #ffe374);
}

.serif, .grow, .shrink {
    font-family: "Liberation Serif", serif;
    font-size: 15px;
    font-weight: bold;
    color: #111;
}

.italic {
    font-style: italic;
    font-weight: normal;
}

.under {
    font-size: 14px;
}

.grow {
    font-size: 17px;
    color: #333;
}

.shrink {
    font-size: 13px;
    color: #333;
}

.combo {
    display: grid;
    align-items: center;
    height: 22px;
    color: #111;
    background-color: #fff;
    border: 1px solid #cdd0d4;
}

.combo select {
    grid-area: 1 / 1;
    width: 100%;
    height: 20px;
    padding-left: 2px;
    appearance: none;
}

.combo::after {
    content: "";
    grid-area: 1 / 1;
    justify-self: end;
    margin-right: 4px;
    border: 3px solid transparent;
    border-top-color: #6a6d73;
    border-bottom: 0;
    pointer-events: none;
}

.face {
    width: 112px;
}

.size {
    width: 43px;
    border-left: 0;
}

.format {
    width: 134px;
}

.percent-style {
    font-size: 13px;
}

.zeros {
    font-family: "Liberation Sans", sans-serif;
    font-size: 10px;
}

.decimals {
    flex-direction: column;
    align-items: flex-end;
    padding-right: 3px;
    font-size: 8px;
    line-height: 9px;
    color: #111;
}

.digits {
    display: flex;
    align-items: center;
    gap: 1px;
    height: 9px;
}

.line {
    height: 22px;
    gap: 4px;
    justify-content: flex-start;
}

.big {
    flex-direction: column;
    justify-content: flex-start;
    padding: 5px 3px 0;
    line-height: 13px;
}

.big svg {
    margin-bottom: 4px;
}

.big span {
    display: flex;
    align-items: center;
    gap: 3px;
}

.big > .caret {
    margin-top: 4px;
}

.clipboard .tools {
    gap: 8px;
    padding: 0 7px;
}

.stack {
    display: flex;
    flex-direction: column;
    align-items: flex-start;
    justify-content: space-between;
    padding: 5px 0 4px;
}

.stack .flat {
    gap: 4px;
}

.styles .tools, .cells .tools {
    justify-content: space-around;
    padding: 0;
}

.edit .tools {
    justify-content: space-between;
    padding: 0 2px 0 9px;
}

.edit-list {
    padding-top: 2px;
}

/* formula bar */

.formula-bar {
    display: flex;
    flex: none;
    height: 29px;
    padding: 4px 0 3px;
    font-size: 12px;
    color: #111;
    background: linear-gradient(#c9ced4, #e4e8ee);
    border-bottom: 1px solid #8d939b;
}

.name-box {
    display: flex;
    align-items: center;
    width: 159px;
    padding-right: 4px;
    background-color: #fff;
    border: 1px solid #a4a9b0;
    border-width: 1px 0;
}

.name-box input {
    flex: 1;
    min-width: 0;
    padding-right: 6px;
    text-align: center;
}

.fx {
    display: flex;
    align-items: center;
    justify-content: space-between;
    width: 86px;
    padding: 0 7px;
    background-color: #dde1e6;
    border: 1px solid #a4a9b0;
    border-radius: 11px 0 0 11px;
}

.fx button {
    font: italic bold 15px "Liberation Serif", serif;
    color: #333;
}

.fx small {
    font-size: 10px;
    margin-top: 5px;
}

.knob {
    width: 8px;
    height: 8px;
    border-radius: 50%;
    background: linear-gradient(#b9bec5, #f5f6f8);
}

.formula {
    flex: 1;
    padding-left: 8px;
    background-color: #fff;
    border: 1px solid #a4a9b0;
    border-width: 1px 0;
}

.expand {
    width: 16px;
    background-color: #dde1e6;
    border: 1px solid #a4a9b0;
}

/* sheet */

.workspace {
    display: flex;
    flex: 1;
    min-height: 0;
}

.sheet {
    flex: 1;
    min-width: 0;
    overflow: hidden;
    background-color: #fff;
}

.sheet table {
    width: 1268px;
    table-layout: fixed;
    border-collapse: separate;
    border-spacing: 0;
    font-family: "Liberation Sans", Arial, sans-serif;
    line-height: 13px;
}

.sheet th, .sheet td {
    height: 15px;
    padding: 1px 0 0;
    overflow: hidden;
    white-space: nowrap;
    text-align: center;
    border-right: 1px solid #d9d9d9;
    border-bottom: 1px solid #d9d9d9;
}

.sheet td {
    font-size: 11px;
    font-weight: bold;
    color: #000;
}

.sheet th {
    font-size: 8px;
    font-weight: normal;
    color: #333;
    background-color: #dfe3e8;
    border-color: #a9aeb6;
}

.sheet .letters th {
    width: 11px;
    height: 11px;
    padding: 0;
    line-height: 10px;
}

.sheet .letters .corner {
    width: 15px;
}

.sheet .letters .col-a {
    width: 139px;
}

.sheet .letters .col-b {
    width: 47px;
}

.sheet .letters .selected {
    background: linear-gradient(#f9d98a, #fec94e);
    border-color: #c29b29;
}

.sheet .marked {
    background-color: #ffd965;
}

.sheet .frozen > * {
    border-bottom-color: #444;
}

.sheet .frozen .heading {
    padding: 0;
    border-bottom: 2px solid #000;
}

.sheet .col-b {
    border-right-color: #555;
}

.sheet td.col-b {
    font-size: 12px;
}

.sheet .edge {
    border-right-color: #000;
}

.sheet .chart {
    padding: 0;
    vertical-align: top;
    border: 0;
}

.plot {
    fill: #10253f;
}

.grid-line {
    stroke: #8d8650;
}

.axis {
    stroke: #000;
}

.axis-text {
    font-size: 12px;
    font-weight: normal;
    text-anchor: end;
}

.price, .average {
    fill: none;
}

.price {
    stroke: #fbe5d6;
    marker: url(#cross);
}

.average {
    stroke: #00a0dc;
    marker: url(#diamond);
}

.scroll-v {
    display: flex;
    flex-direction: column;
    align-items: center;
    width: 20px;
    padding-right: 3px;
    background: linear-gradient(90deg, #d7dce3, #e2e6ec 16px, #8d939b 16px, #8d939b 17px, #e4e8ee 17px);
}

.scroll-v button {
    width: 16px;
    height: 17px;
}

.thumb-v {
    width: 15px;
    height: 31px;
    margin: 77px 0 auto;
    border: 1px solid #8d939b;
    border-radius: 2px;
    background: repeating-linear-gradient(#777d86 0 1px, transparent 1px 2px) center / 7px 7px no-repeat,
        linear-gradient(90deg, #fff, #d8dce2);
}

.up, .down, .left, .right {
    border: 5px solid transparent;
}

.up {
    border-bottom-color: #444;
    border-top: 0;
}

.down {
    border-top-color: #555;
    border-bottom: 0;
}

.left {
    border-width: 4px 5px;
    border-right-color: #333;
    border-left: 0;
}

.right {
    border-width: 4px 5px;
    border-left-color: #444;
    border-right: 0;
}

/* sheet tabs */

.sheet-bar {
    display: flex;
    flex: none;
    height: 17px;
    background-color: #dce1e8;
    border-bottom: 1px solid #8d939b;
}

.sheet-nav {
    display: flex;
    align-items: center;
    justify-content: space-between;
    width: 63px;
    padding: 0 6px;
    border-right: 1px solid #b0b5bd;
}

.sheet-tabs {
    display: flex;
    font-size: 12px;
    color: #555a60;
}

.sheet-tabs button {
    --fill: linear-gradient(#dfe3e8, #eff1f4);
    --edge: #9a9fa7;
    margin-left: -8px;
    padding: 0 13px;
    line-height: 16px;
    clip-path: polygon(9px 0, 100% 0, calc(100% - 9px) 100%, 0 100%);
    background: linear-gradient(to bottom right, transparent 42%, var(--edge) 42% 50%, transparent 50%) right / 9px 100% no-repeat, var(--fill);
}

.sheet-tabs .first {
    margin-left: 0;
    padding-left: 10px;
    clip-path: polygon(0 0, 100% 0, calc(100% - 9px) 100%, 0 100%);
}

.sheet-tabs .navy { --fill: linear-gradient(#1f497d, #41669c); --edge: #eee; color: #fff; }
.sheet-tabs .green { --fill: linear-gradient(#0f0, #0f0); --edge: #eee; color: #000; }
.sheet-tabs .yellow { --fill: linear-gradient(#ff0, #ff0); --edge: #eee; color: #000; }
.sheet-tabs .red { --fill: linear-gradient(#c00000, #d63a32); --edge: #eee; color: #ffe9c9; }
.sheet-tabs .cyan { --fill: linear-gradient(#0ff, #0ff); --edge: #eee; color: #000; }
.sheet-tabs .purple { --fill: linear-gradient(#7030a0, #925bb9); --edge: #eee; color: #fff; }

.sheet-tabs .current {
    --fill: linear-gradient(#fff, #fff);
    margin-left: -6px;
    padding-left: 9px;
    font-weight: bold;
    color: #444;
    clip-path: polygon(0 0, 100% 0, calc(100% - 9px) 100%, 0 100%);
}

.scroll-h {
    display: flex;
    flex: 1;
    align-items: center;
    max-width: 461px;
    margin-left: auto;
}

.scroll-h button {
    width: 17px;
}

.scroll-h .end {
    margin-left: auto;
    margin-right: 20px;
}

.splitter {
    width: 8px;
    height: 15px;
    border: 2px solid #8d939b;
    background-color: #fff;
}

.thumb-h {
    width: 16px;
    height: 15px;
    border: 1px solid #8d939b;
    border-radius: 2px;
    background: repeating-linear-gradient(90deg, #777d86 0 1px, transparent 1px 2px) center / 7px 7px no-repeat,
        linear-gradient(#fff, #d8dce2);
}

/* status bar */

.status {
    display: flex;
    flex: none;
    align-items: center;
    justify-content: space-between;
    height: 21px;
    background: linear-gradient(#dfe2e6, #b9bdc2);
}

.ready {
    padding: 0 9px 0 8px;
    line-height: 19px;
    border-right: 1px solid #83888f;
}

.views {
    display: flex;
    align-items: center;
    padding: 0 4px;
    border-left: 1px solid #9a9fa6;
}

.view {
    width: 19px;
    height: 19px;
    border: 1px solid transparent;
    border-radius: 2px;
}

.view.on {
    margin-left: 5px;
}

.percent {
    width: 45px;
    padding-right: 4px;
    text-align: center;
}

/* taskbar */

.taskbar {
    display: flex;
    flex: none;
    align-items: stretch;
    height: 40px;
    color: #fff;
    border-top: 1px solid #111;
    box-shadow: inset 0 1px #8e9099;
    background: radial-gradient(ellipse 100px 30px at 78% 110%, #151416 60%, transparent),
        radial-gradient(ellipse 50px 50px at 79% 20%, #17161a 30%, transparent),
        linear-gradient(90deg, #26272f 0, #343641 12%, #484a57 30%, #535663 48%, #4b4d5c 66%, #353947 72%, #3c3f4d 84%, #454856 100%);
}

.start {
    width: 54px;
}

.pinned {
    width: 61px;
    margin-left: 1px;
}

.pinned:nth-child(2) {
    width: 70px;
    margin: 0;
}

.pinned:nth-child(3) {
    width: 52px;
    margin: 0;
}

.pinned:nth-child(4) {
    width: 68px;
}

.task {
    width: 159px;
    margin: 0 1px;
    padding: 0 6px;
    gap: 6px;
    justify-content: flex-start;
    border: 1px solid #9fa1aa;
    border-radius: 3px;
    background: linear-gradient(160deg, #8b8d98, #646672 40%, #535562 41%, #686a77);
}

.task.front {
    background: linear-gradient(160deg, #cbccd1, #a2a3ab 40%, #85868f 41%, #a0a1a9);
    border-color: #d5d6da;
}

.tray {
    display: flex;
    align-items: center;
    gap: 8px;
    margin-left: auto;
    padding-right: 4px;
}

.tray-up {
    margin: 0 5px;
}

.clock {
    display: flex;
    flex-direction: column;
    align-items: center;
    width: 82px;
    line-height: 17px;
    padding-top: 3px;
}

.show-desktop {
    width: 14px;
    margin-right: 1px;
    border: 1px solid #85868e;
    background: linear-gradient(135deg, #777985, #33353f);
}
```
